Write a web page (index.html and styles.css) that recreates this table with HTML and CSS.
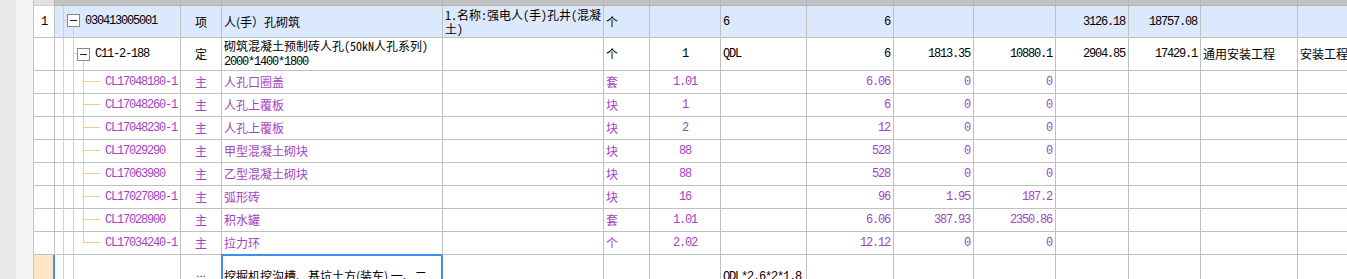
FILE: index.html
```html
<!DOCTYPE html>
<html lang="zh-CN">
<head>
<meta charset="utf-8">
<title>清单</title>
<link rel="stylesheet" href="styles.css">
</head>
<body>
<div class="page">
  <div class="gutter"></div>
  <div class="sheet">
    <!-- header strip -->
    <div class="c hd hd0"></div>
    <div class="c hd th"></div>
    <div class="c hd"></div><div class="c hd"></div><div class="c hd"></div><div class="c hd"></div><div class="c hd"></div><div class="c hd"></div><div class="c hd"></div><div class="c hd"></div><div class="c hd"></div><div class="c hd"></div><div class="c hd"></div><div class="c hd"></div><div class="c hd"></div>

    <!-- row 1 -->
    <div class="c ctr n">1</div>
    <div class="c sel t t1"><span class="bx"><i></i></span><span class="n">030413005001</span></div>
    <div class="c sel ctr">项</div>
    <div class="c sel">人(手）孔砌筑</div>
    <div class="c sel wrap hw"><span class="tx">1.名称:强电人(手)孔井(混凝<br>土)</span></div>
    <div class="c sel">个</div>
    <div class="c sel"></div>
    <div class="c sel n">6</div>
    <div class="c sel r n">6</div>
    <div class="c sel"></div>
    <div class="c sel"></div>
    <div class="c sel r n">3126.18</div>
    <div class="c sel r n">18757.08</div>
    <div class="c sel"></div>
    <div class="c sel"></div>

    <!-- row 2 -->
    <div class="c"></div>
    <div class="c t t2"><span class="bx"><i></i></span><span class="n">C11-2-188</span></div>
    <div class="c ctr">定</div>
    <div class="c wrap hw"><span class="tx">砌筑混凝土预制砖人孔(50kN人孔系列)<br><span class="n">2000*1400*1800</span></span></div>
    <div class="c"></div>
    <div class="c">个</div>
    <div class="c ctr n">1</div>
    <div class="c n">QDL</div>
    <div class="c r n">6</div>
    <div class="c r n">1813.35</div>
    <div class="c r n">10880.1</div>
    <div class="c r n">2904.85</div>
    <div class="c r n">17429.1</div>
    <div class="c">通用安装工程</div>
    <div class="c">安装工程</div>

    <!-- child rows -->
    <div class="c"></div>
    <div class="c t tc p"><span class="n">CL17048180-1</span></div>
    <div class="c ctr p">主</div><div class="c p">人孔口圈盖</div><div class="c"></div><div class="c p">套</div>
    <div class="c ctr n p">1.01</div><div class="c"></div><div class="c r n p">6.06</div><div class="c r n p">0</div><div class="c r n p">0</div>
    <div class="c"></div><div class="c"></div><div class="c"></div><div class="c"></div>

    <div class="c"></div>
    <div class="c t tc p"><span class="n">CL17048260-1</span></div>
    <div class="c ctr p">主</div><div class="c p">人孔上覆板</div><div class="c"></div><div class="c p">块</div>
    <div class="c ctr n p">1</div><div class="c"></div><div class="c r n p">6</div><div class="c r n p">0</div><div class="c r n p">0</div>
    <div class="c"></div><div class="c"></div><div class="c"></div><div class="c"></div>

    <div class="c"></div>
    <div class="c t tc p"><span class="n">CL17048230-1</span></div>
    <div class="c ctr p">主</div><div class="c p">人孔上覆板</div><div class="c"></div><div class="c p">块</div>
    <div class="c ctr n p">2</div><div class="c"></div><div class="c r n p">12</div><div class="c r n p">0</div><div class="c r n p">0</div>
    <div class="c"></div><div class="c"></div><div class="c"></div><div class="c"></div>

    <div class="c"></div>
    <div class="c t tc p"><span class="n">CL17029290</span></div>
    <div class="c ctr p">主</div><div class="c p">甲型混凝土砌块</div><div class="c"></div><div class="c p">块</div>
    <div class="c ctr n p">88</div><div class="c"></div><div class="c r n p">528</div><div class="c r n p">0</div><div class="c r n p">0</div>
    <div class="c"></div><div class="c"></div><div class="c"></div><div class="c"></div>

    <div class="c"></div>
    <div class="c t tc p"><span class="n">CL17063980</span></div>
    <div class="c ctr p">主</div><div class="c p">乙型混凝土砌块</div><div class="c"></div><div class="c p">块</div>
    <div class="c ctr n p">88</div><div class="c"></div><div class="c r n p">528</div><div class="c r n p">0</div><div class="c r n p">0</div>
    <div class="c"></div><div class="c"></div><div class="c"></div><div class="c"></div>

    <div class="c"></div>
    <div class="c t tc p"><span class="n">CL17027080-1</span></div>
    <div class="c ctr p">主</div><div class="c p">弧形砖</div><div class="c"></div><div class="c p">块</div>
    <div class="c ctr n p">16</div><div class="c"></div><div class="c r n p">96</div><div class="c r n p">1.95</div><div class="c r n p">187.2</div>
    <div class="c"></div><div class="c"></div><div class="c"></div><div class="c"></div>

    <div class="c"></div>
    <div class="c t tc p"><span class="n">CL17028900</span></div>
    <div class="c ctr p">主</div><div class="c p">积水罐</div><div class="c"></div><div class="c p">套</div>
    <div class="c ctr n p">1.01</div><div class="c"></div><div class="c r n p">6.06</div><div class="c r n p">387.93</div><div class="c r n p">2350.86</div>
    <div class="c"></div><div class="c"></div><div class="c"></div><div class="c"></div>

    <div class="c"></div>
    <div class="c t tl p"><span class="n">CL17034240-1</span></div>
    <div class="c ctr p">主</div><div class="c p">拉力环</div><div class="c"></div><div class="c p">个</div>
    <div class="c ctr n p">2.02</div><div class="c"></div><div class="c r n p">12.12</div><div class="c r n p">0</div><div class="c r n p">0</div>
    <div class="c"></div><div class="c"></div><div class="c"></div><div class="c"></div>

    <!-- editing row -->
    <div class="c z cur"></div>
    <div class="c z t tz"></div>
    <div class="c z ctr dots">…</div>
    <div class="c z edit">挖掘机挖沟槽、基坑土方(装车) 一、二</div>
    <div class="c z"></div>
    <div class="c z"></div>
    <div class="c z"></div>
    <div class="c z n expr">QDL*2.6*2*1.8</div>
    <div class="c z"></div>
    <div class="c z"></div>
    <div class="c z"></div>
    <div class="c z"></div>
    <div class="c z"></div>
    <div class="c z low">通用安装工程</div>
    <div class="c z low">安装工程</div>
  </div>
</div>
</body>
</html>
```
FILE: styles.css
```css
html, body {
  margin: 0;
  height: 279px;
  overflow: hidden;
  background: #fff;
}
body {
  font-family: "Noto Sans CJK SC", "Noto Sans", sans-serif;
  font-size: 12px;
  color: #000;
}
.page {
  display: flex;
  width: 1400px;
}
.gutter {
  flex: none;
  width: 34px;
  box-sizing: border-box;
  height: 340px;
  border-right: 1px solid #c4c4c4;
  background: linear-gradient(to right, #e9e9e9 0 16px, #f4f4f4 16px);
}
.sheet {
  flex: none;
  display: grid;
  grid-template-columns: 21px 126px 41px 221px 161px 46px 71px 86px 87px 80px 82px 73px 72px 97px 100px;
  grid-template-rows: 6px 32px 33px repeat(8, 23px) 70px;
}
.c {
  box-sizing: border-box;
  border-right: 1px solid #c0c0c0;
  border-bottom: 1px solid #c0c0c0;
  display: flex;
  align-items: center;
  padding: 0 2px;
  line-height: 14px;
  white-space: nowrap;
  overflow: hidden;
  min-width: 0;
}
.wrap { white-space: nowrap; }
.tx { display: block; }
.hw { font-feature-settings: "hwid" 1; }
.hd {
  background: #c2c2c2;
  border-right-color: #b6b6b6;
  border-bottom-color: #b6b6b6;
}
.hd0 {
  background: #e2e2e2;
  border-bottom-color: #cfcfcf;
}
.sel { background-color: #dce9fc; }
.ctr { justify-content: center; }
.r { justify-content: flex-end; padding-right: 3px; }
.p { color: #a244c2; }
.n {
  font-family: "Liberation Mono", monospace;
  font-size: 12px;
  letter-spacing: -1.2px;
}

/* tree column */
.t {
  --o: linear-gradient(#f9c98b, #f9c98b);
  background-repeat: no-repeat;
}
.th {
  background-image: linear-gradient(#e6b98a, #e6b98a);
  background-position: 8px 0;
  background-size: 1px 100%;
  background-repeat: no-repeat;
}
.t1 {
  padding-left: 12px;
  padding-bottom: 2px;
  background-image: var(--o), var(--o), var(--o);
  background-position: 8px 0, 8px 14px, 18px 21px;
  background-size: 1px 100%, 4px 1px, 1px 100%;
}
.t2 {
  padding-left: 22px;
  background-image: var(--o), var(--o), var(--o), var(--o);
  background-position: 8px 0, 18px 0, 18px 15px, 28px 22px;
  background-size: 1px 100%, 1px 100%, 4px 1px, 1px 100%;
}
.tc, .tl {
  padding-left: 50px;
  background-image: var(--o), var(--o), var(--o), var(--o);
  background-position: 8px 0, 18px 0, 28px 0, 28px 10px;
  background-size: 1px 100%, 1px 100%, 1px 100%, 17px 1px;
}
.tl {
  background-size: 1px 100%, 1px 100%, 1px 11px, 17px 1px;
}
.tz {
  background-image: var(--o), var(--o);
  background-position: 8px 0, 18px 0;
  background-size: 1px 100%, 1px 100%;
}
.bx {
  flex: none;
  box-sizing: border-box;
  width: 13px;
  height: 13px;
  border: 1px solid #8a8a8a;
  background: #fff;
  margin-right: 5px;
  display: flex;
  align-items: center;
  justify-content: center;
}
.bx i {
  display: block;
  width: 7px;
  height: 1px;
  background: #222;
}

/* editing row */
.z { align-items: flex-start; }
.cur {
  background: #fde5c6;
  border-right-color: #3f8ff0;
  box-shadow: inset -1px 0 0 #3f8ff0;
}
.dots {
  padding-top: 12px;
  font-family: "Liberation Sans", sans-serif;
  font-size: 10px;
}
.edit {
  padding-top: 14px;
  border-right-color: #3f8ff0;
  box-shadow: -1px -1px 0 0 #3f8ff0, inset 1px 1px 0 #3f8ff0, inset -1px 0 0 #3f8ff0;
}
.expr { padding-top: 15px; }
.low { padding-top: 23px; }
```
